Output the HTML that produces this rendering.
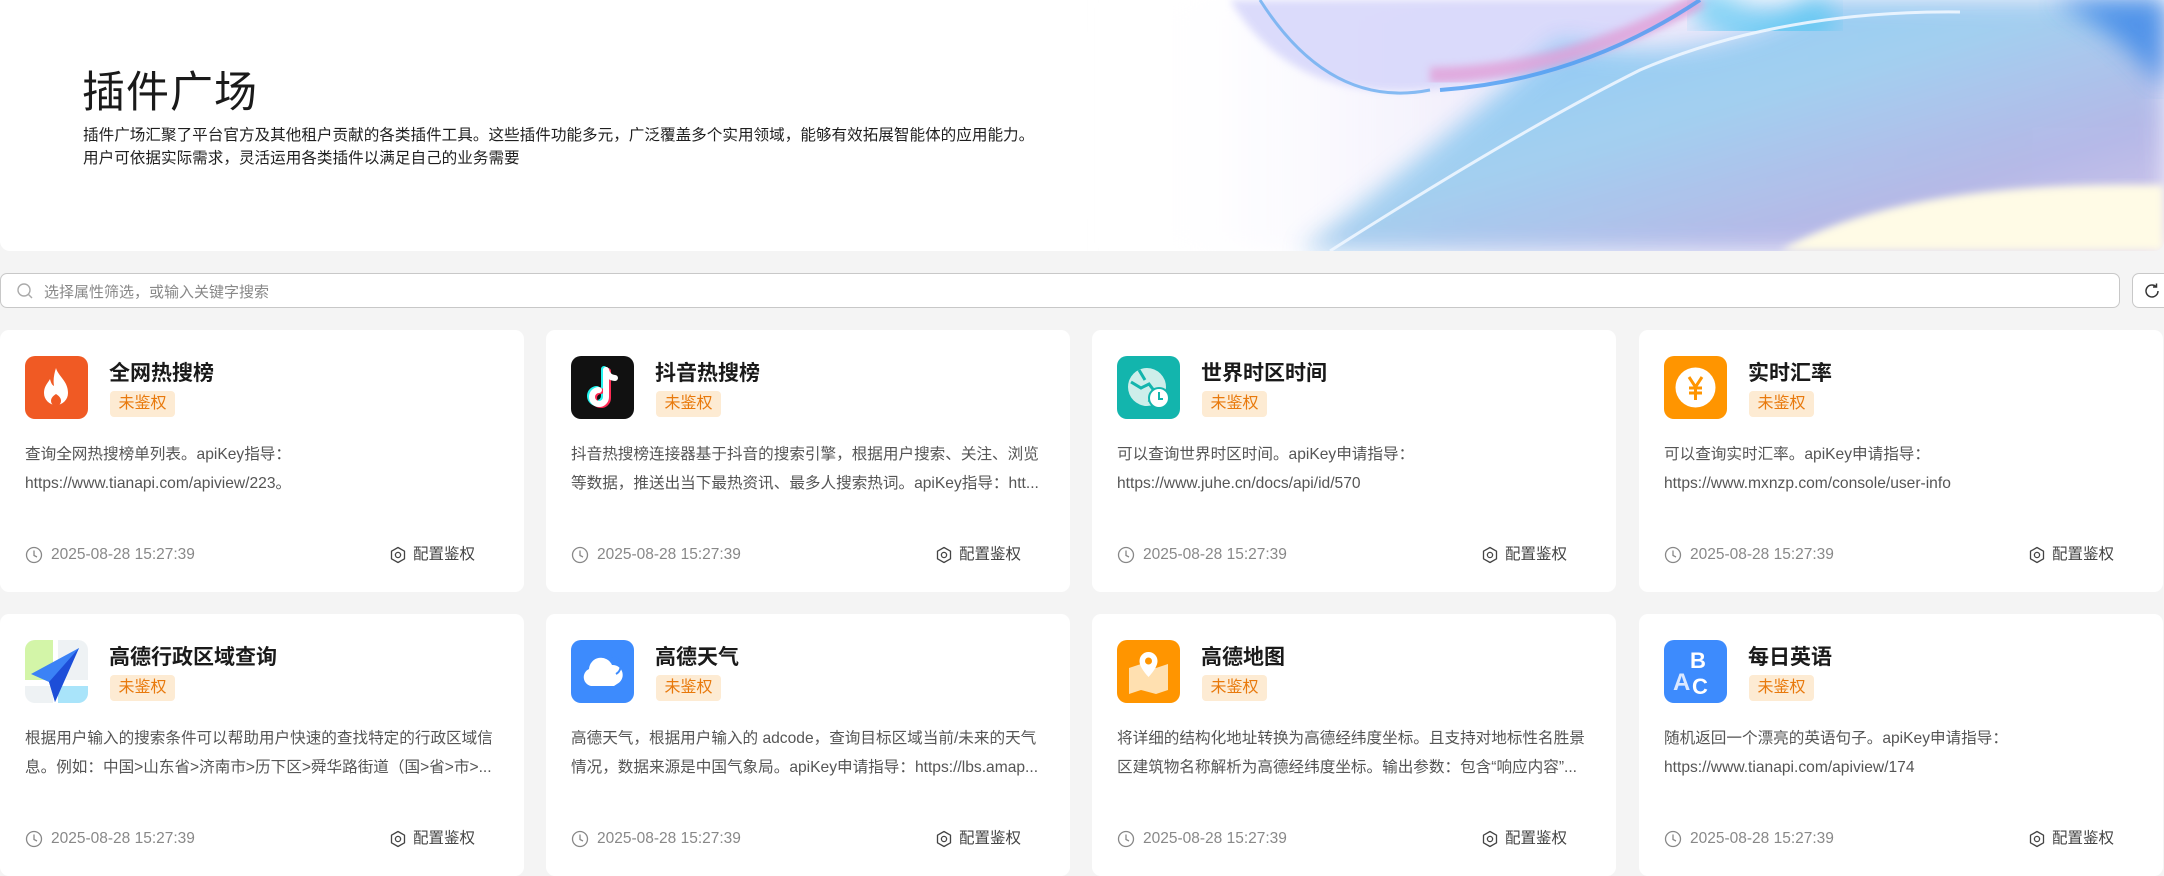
<!DOCTYPE html>
<html><head><meta charset="utf-8"><style>
*{box-sizing:border-box;margin:0;padding:0}
body{width:2164px;height:871px;overflow:hidden;background:#f4f4f4;font-family:"Liberation Sans","Noto Sans CJK SC",sans-serif;position:relative}
.banner{position:absolute;left:0;top:0;width:2164px;height:251px;background:#fff;overflow:hidden;border-radius:0 0 10px 10px}
.banner h1{position:absolute;left:82px;top:58px;font-size:43px;font-weight:400;color:#1a1a1a;letter-spacing:1px}
.banner p{position:absolute;left:83px;top:124px;font-size:15.6px;line-height:23px;color:#1f1f1f}
.search{position:absolute;left:0;top:273px;width:2120px;height:35px;border:1px solid #c8c8c8;border-radius:7px;background:#fff}
.search span{position:absolute;left:43px;top:7px;font-size:15px;color:#888}
.search svg{position:absolute;left:15px;top:8px}
.refresh{position:absolute;left:2132px;top:273px;width:40px;height:35px;border:1px solid #c8c8c8;border-radius:7px;background:#fff}
.card{position:absolute;width:524px;height:262px;background:#fff;border-radius:9px}
.icon{position:absolute;left:25px;top:26px;width:63px;height:63px;border-radius:10px;overflow:hidden}
.title{position:absolute;left:109px;top:30px;font-size:21px;line-height:28px;font-weight:700;color:#1a1a1a}
.badge{position:absolute;left:110px;top:61px;width:65px;height:26px;background:#fdebd3;border-radius:4px;color:#e8790c;font-size:16px;text-align:center;line-height:26px}
.desc{position:absolute;left:25px;top:110px;width:475px;font-size:15.6px;line-height:29px;color:#555;height:58px;overflow:hidden}
.desc div{white-space:nowrap;overflow:hidden;text-overflow:ellipsis}
.time{position:absolute;left:25px;top:214px;height:22px;font-size:15.5px;line-height:22px;color:#888}
.time svg{position:absolute;left:0;top:2px}
.time span{position:absolute;left:26px;top:0;white-space:nowrap}
.cfg{position:absolute;left:389px;top:214px;height:22px;font-size:15.5px;line-height:22px;color:#444}
.cfg svg{position:absolute;left:0;top:2px}
.cfg span{position:absolute;left:24px;top:0;white-space:nowrap}
</style></head><body>
<div class="banner">
<svg width="2164" height="251" style="position:absolute;left:0;top:0">
<defs>
<linearGradient id="g1" x1="0" y1="0" x2="1" y2="1"><stop offset="0" stop-color="#7fc4fa"/><stop offset=".45" stop-color="#9fcff0"/><stop offset=".75" stop-color="#b3b6e6"/><stop offset="1" stop-color="#d5c8ea"/></linearGradient>
<linearGradient id="g2" x1="0" y1="0" x2="1" y2="0"><stop offset="0" stop-color="#fff" stop-opacity="0"/><stop offset=".35" stop-color="#f1eefc"/><stop offset="1" stop-color="#e3def8"/></linearGradient>
<filter id="b"><feGaussianBlur stdDeviation="12"/></filter>
<filter id="b2"><feGaussianBlur stdDeviation="4"/></filter>
</defs>
<rect x="1100" y="0" width="1064" height="251" fill="url(#g2)" filter="url(#b)"/>
<path d="M1230 0 Q1290 100 1420 90 Q1560 80 1720 0 Z" fill="#d8d8fb" opacity=".9" filter="url(#b2)"/>
<path d="M1560 40 Q1700 70 1820 0 L2164 0 L2164 251 L1300 251 Q1420 160 1560 40Z" fill="url(#g1)" opacity=".95" filter="url(#b)"/>
<path d="M1700 0 Q1760 50 1830 10" stroke="#42c4f2" stroke-width="40" fill="none" opacity=".6" filter="url(#b)"/>
<path d="M1430 75 Q1560 75 1700 0" stroke="#e2a0d8" stroke-width="16" fill="none" opacity=".8" filter="url(#b2)"/>
<path d="M1260 0 Q1330 110 1430 90" stroke="#6aaef0" stroke-width="3" fill="none" opacity=".8"/>
<path d="M1440 90 Q1580 80 1700 0" stroke="#4a9cf2" stroke-width="4" fill="none" opacity=".8"/>
<path d="M2050 0 L2164 0 L2164 90 Q2120 30 2050 0Z" fill="#3a86e8" opacity=".8" filter="url(#b)"/>
<path d="M1780 251 Q1900 180 2164 185 L2164 251Z" fill="#fffbe6" filter="url(#b2)"/>
<path d="M1330 251 Q1520 130 1640 70 Q1780 10 1960 12" stroke="#eef6ff" stroke-width="3" fill="none" opacity=".9"/>
</svg>
<h1>插件广场</h1>
<p>插件广场汇聚了平台官方及其他租户贡献的各类插件工具。这些插件功能多元，广泛覆盖多个实用领域，能够有效拓展智能体的应用能力。<br>用户可依据实际需求，灵活运用各类插件以满足自己的业务需要</p>
</div>
<div class="search"><svg width="18" height="18" viewBox="0 0 18 18"><circle cx="8" cy="8" r="6" stroke="#aaa" stroke-width="1.4" fill="none"/><path d="M12.5 12.5L16 16" stroke="#aaa" stroke-width="1.4"/></svg><span>选择属性筛选，或输入关键字搜索</span></div>
<div class="refresh"><svg width="20" height="20" viewBox="0 0 20 20" style="position:absolute;left:9px;top:7px"><path d="M16 10a6 6 0 1 1-2-4.5" stroke="#333" stroke-width="1.5" fill="none"/><path d="M14.5 2.5v3.5h-3.5" stroke="#333" stroke-width="1.5" fill="none"/></svg></div>

<!-- row 1 -->
<div class="card" style="left:0;top:330px">
<div class="icon" style="background:#f05a24"><svg width="63" height="63" viewBox="0 0 63 63"><path d="M31 12c2 8 12 13 12 25a12 12 0 0 1-24 0c0-7 4-10 6-14 1 4 2 6 4 7-1-6 0-12 2-18z" fill="#fff"/><path d="M31 38c3 2 5 4 5 7a5 5 0 0 1-10 0c0-3 2-5 5-7z" fill="#f05a24"/></svg></div>
<div class="title">全网热搜榜</div><div class="badge">未鉴权</div>
<div class="desc"><div>查询全网热搜榜单列表。apiKey指导：</div><div>https://www.tianapi.com/apiview/223。</div></div>
<div class="time"><svg width="18" height="18" viewBox="0 0 18 18"><circle cx="9" cy="9" r="7.5" stroke="#888" stroke-width="1.3" fill="none"/><path d="M9 4.5V9.5L12 11" stroke="#888" stroke-width="1.3" fill="none"/></svg><span>2025-08-28 15:27:39</span></div>
<div class="cfg"><svg width="18" height="18" viewBox="0 0 18 18"><path d="M9 1.5L15.5 5.2V12.8L9 16.5L2.5 12.8V5.2Z" stroke="#444" stroke-width="1.3" stroke-linejoin="round" fill="none"/><circle cx="9" cy="9" r="2.6" stroke="#444" stroke-width="1.3" fill="none"/></svg><span>配置鉴权</span></div>
</div>
<div class="card" style="left:546px;top:330px">
<div class="icon" style="background:#111"><svg width="63" height="63" viewBox="0 0 63 63"><g fill="none" stroke-width="6" stroke-linecap="round"><path d="M35 14v27a7 7 0 1 1-7-7" stroke="#25f4ee" transform="translate(-2 -1)"/><path d="M35 14v27a7 7 0 1 1-7-7" stroke="#fe2c55" transform="translate(2 1)"/><path d="M35 14v27a7 7 0 1 1-7-7" stroke="#fff"/><path d="M35 14c1 5 5 8 9 8" stroke="#fff"/></g></svg></div>
<div class="title">抖音热搜榜</div><div class="badge">未鉴权</div>
<div class="desc"><div>抖音热搜榜连接器基于抖音的搜索引擎，根据用户搜索、关注、浏览</div><div>等数据，推送出当下最热资讯、最多人搜索热词。apiKey指导：htt...</div></div>
<div class="time"><svg width="18" height="18" viewBox="0 0 18 18"><circle cx="9" cy="9" r="7.5" stroke="#888" stroke-width="1.3" fill="none"/><path d="M9 4.5V9.5L12 11" stroke="#888" stroke-width="1.3" fill="none"/></svg><span>2025-08-28 15:27:39</span></div>
<div class="cfg"><svg width="18" height="18" viewBox="0 0 18 18"><path d="M9 1.5L15.5 5.2V12.8L9 16.5L2.5 12.8V5.2Z" stroke="#444" stroke-width="1.3" stroke-linejoin="round" fill="none"/><circle cx="9" cy="9" r="2.6" stroke="#444" stroke-width="1.3" fill="none"/></svg><span>配置鉴权</span></div>
</div>
<div class="card" style="left:1092px;top:330px">
<div class="icon" style="background:#13b5ad"><svg width="63" height="63" viewBox="0 0 63 63"><circle cx="30" cy="31" r="19" fill="#cdeeea"/><path d="M14 26l10 6 8-4 6 8-6 10M22 14l6 10" stroke="#13b5ad" stroke-width="3" fill="none"/><circle cx="42" cy="42" r="10" fill="#fff" stroke="#13b5ad" stroke-width="2"/><path d="M42 36v7h4" stroke="#13b5ad" stroke-width="2" fill="none"/></svg></div>
<div class="title">世界时区时间</div><div class="badge">未鉴权</div>
<div class="desc"><div>可以查询世界时区时间。apiKey申请指导：</div><div>https://www.juhe.cn/docs/api/id/570</div></div>
<div class="time"><svg width="18" height="18" viewBox="0 0 18 18"><circle cx="9" cy="9" r="7.5" stroke="#888" stroke-width="1.3" fill="none"/><path d="M9 4.5V9.5L12 11" stroke="#888" stroke-width="1.3" fill="none"/></svg><span>2025-08-28 15:27:39</span></div>
<div class="cfg"><svg width="18" height="18" viewBox="0 0 18 18"><path d="M9 1.5L15.5 5.2V12.8L9 16.5L2.5 12.8V5.2Z" stroke="#444" stroke-width="1.3" stroke-linejoin="round" fill="none"/><circle cx="9" cy="9" r="2.6" stroke="#444" stroke-width="1.3" fill="none"/></svg><span>配置鉴权</span></div>
</div>
<div class="card" style="left:1639px;top:330px">
<div class="icon" style="background:#ff9500"><svg width="63" height="63" viewBox="0 0 63 63"><circle cx="31.5" cy="31.5" r="20" fill="#fff"/><path d="M25 21l6.5 10 6.5-10M31.5 31v13M25 32h13M25 37h13" stroke="#ff9500" stroke-width="3" fill="none"/></svg></div>
<div class="title">实时汇率</div><div class="badge">未鉴权</div>
<div class="desc"><div>可以查询实时汇率。apiKey申请指导：</div><div>https://www.mxnzp.com/console/user-info</div></div>
<div class="time"><svg width="18" height="18" viewBox="0 0 18 18"><circle cx="9" cy="9" r="7.5" stroke="#888" stroke-width="1.3" fill="none"/><path d="M9 4.5V9.5L12 11" stroke="#888" stroke-width="1.3" fill="none"/></svg><span>2025-08-28 15:27:39</span></div>
<div class="cfg"><svg width="18" height="18" viewBox="0 0 18 18"><path d="M9 1.5L15.5 5.2V12.8L9 16.5L2.5 12.8V5.2Z" stroke="#444" stroke-width="1.3" stroke-linejoin="round" fill="none"/><circle cx="9" cy="9" r="2.6" stroke="#444" stroke-width="1.3" fill="none"/></svg><span>配置鉴权</span></div>
</div>

<!-- row 2 -->
<div class="card" style="left:0;top:614px">
<div class="icon" style="background:#eef2f4"><svg width="63" height="63" viewBox="0 0 63 63"><rect x="0" y="0" width="28" height="40" fill="#d3f5a8"/><rect x="33" y="46" width="30" height="17" fill="#a9e4fa"/><rect x="28" y="0" width="5" height="63" fill="#fff"/><rect x="0" y="40" width="63" height="6" fill="#fff"/><path d="M54 8L6 34l18 8 6 20z" fill="#3b82f6"/><path d="M54 8L24 42l6 20z" fill="#1d4ed8"/></svg></div>
<div class="title">高德行政区域查询</div><div class="badge">未鉴权</div>
<div class="desc"><div>根据用户输入的搜索条件可以帮助用户快速的查找特定的行政区域信</div><div>息。例如：中国&gt;山东省&gt;济南市&gt;历下区&gt;舜华路街道（国&gt;省&gt;市&gt;...</div></div>
<div class="time"><svg width="18" height="18" viewBox="0 0 18 18"><circle cx="9" cy="9" r="7.5" stroke="#888" stroke-width="1.3" fill="none"/><path d="M9 4.5V9.5L12 11" stroke="#888" stroke-width="1.3" fill="none"/></svg><span>2025-08-28 15:27:39</span></div>
<div class="cfg"><svg width="18" height="18" viewBox="0 0 18 18"><path d="M9 1.5L15.5 5.2V12.8L9 16.5L2.5 12.8V5.2Z" stroke="#444" stroke-width="1.3" stroke-linejoin="round" fill="none"/><circle cx="9" cy="9" r="2.6" stroke="#444" stroke-width="1.3" fill="none"/></svg><span>配置鉴权</span></div>
</div>
<div class="card" style="left:546px;top:614px">
<div class="icon" style="background:#3d8bfd"><svg width="63" height="63" viewBox="0 0 63 63"><path d="M20 46a9 9 0 0 1-2-17 12 12 0 0 1 23-4 10 10 0 0 1 5 19l-3 2z" fill="#fff"/><path d="M36 18a9 9 0 0 1 9 16" stroke="#3d8bfd" stroke-width="2" fill="none"/></svg></div>
<div class="title">高德天气</div><div class="badge">未鉴权</div>
<div class="desc"><div>高德天气，根据用户输入的 adcode，查询目标区域当前/未来的天气</div><div>情况，数据来源是中国气象局。apiKey申请指导：https://lbs.amap...</div></div>
<div class="time"><svg width="18" height="18" viewBox="0 0 18 18"><circle cx="9" cy="9" r="7.5" stroke="#888" stroke-width="1.3" fill="none"/><path d="M9 4.5V9.5L12 11" stroke="#888" stroke-width="1.3" fill="none"/></svg><span>2025-08-28 15:27:39</span></div>
<div class="cfg"><svg width="18" height="18" viewBox="0 0 18 18"><path d="M9 1.5L15.5 5.2V12.8L9 16.5L2.5 12.8V5.2Z" stroke="#444" stroke-width="1.3" stroke-linejoin="round" fill="none"/><circle cx="9" cy="9" r="2.6" stroke="#444" stroke-width="1.3" fill="none"/></svg><span>配置鉴权</span></div>
</div>
<div class="card" style="left:1092px;top:614px">
<div class="icon" style="background:#ff9500"><svg width="63" height="63" viewBox="0 0 63 63"><path d="M12 28l12-4 15 4 12-4v26l-12 4-15-4-12 4z" fill="#ffe0b0"/><path d="M31.5 12a9 9 0 0 1 9 9c0 7-9 16-9 16s-9-9-9-16a9 9 0 0 1 9-9z" fill="#fff"/><circle cx="31.5" cy="21" r="3.5" fill="#ff9500"/></svg></div>
<div class="title">高德地图</div><div class="badge">未鉴权</div>
<div class="desc"><div>将详细的结构化地址转换为高德经纬度坐标。且支持对地标性名胜景</div><div>区建筑物名称解析为高德经纬度坐标。输出参数：包含“响应内容”...</div></div>
<div class="time"><svg width="18" height="18" viewBox="0 0 18 18"><circle cx="9" cy="9" r="7.5" stroke="#888" stroke-width="1.3" fill="none"/><path d="M9 4.5V9.5L12 11" stroke="#888" stroke-width="1.3" fill="none"/></svg><span>2025-08-28 15:27:39</span></div>
<div class="cfg"><svg width="18" height="18" viewBox="0 0 18 18"><path d="M9 1.5L15.5 5.2V12.8L9 16.5L2.5 12.8V5.2Z" stroke="#444" stroke-width="1.3" stroke-linejoin="round" fill="none"/><circle cx="9" cy="9" r="2.6" stroke="#444" stroke-width="1.3" fill="none"/></svg><span>配置鉴权</span></div>
</div>
<div class="card" style="left:1639px;top:614px">
<div class="icon" style="background:#3d8bfd"><svg width="63" height="63" viewBox="0 0 63 63"><text x="26" y="28" font-family="Liberation Sans" font-weight="700" font-size="22" fill="#fff">B</text><text x="9" y="50" font-family="Liberation Sans" font-weight="700" font-size="24" fill="#dbe8ff">A</text><text x="28" y="54" font-family="Liberation Sans" font-weight="700" font-size="22" fill="#fff">C</text></svg></div>
<div class="title">每日英语</div><div class="badge">未鉴权</div>
<div class="desc"><div>随机返回一个漂亮的英语句子。apiKey申请指导：</div><div>https://www.tianapi.com/apiview/174</div></div>
<div class="time"><svg width="18" height="18" viewBox="0 0 18 18"><circle cx="9" cy="9" r="7.5" stroke="#888" stroke-width="1.3" fill="none"/><path d="M9 4.5V9.5L12 11" stroke="#888" stroke-width="1.3" fill="none"/></svg><span>2025-08-28 15:27:39</span></div>
<div class="cfg"><svg width="18" height="18" viewBox="0 0 18 18"><path d="M9 1.5L15.5 5.2V12.8L9 16.5L2.5 12.8V5.2Z" stroke="#444" stroke-width="1.3" stroke-linejoin="round" fill="none"/><circle cx="9" cy="9" r="2.6" stroke="#444" stroke-width="1.3" fill="none"/></svg><span>配置鉴权</span></div>
</div>
</body></html>
